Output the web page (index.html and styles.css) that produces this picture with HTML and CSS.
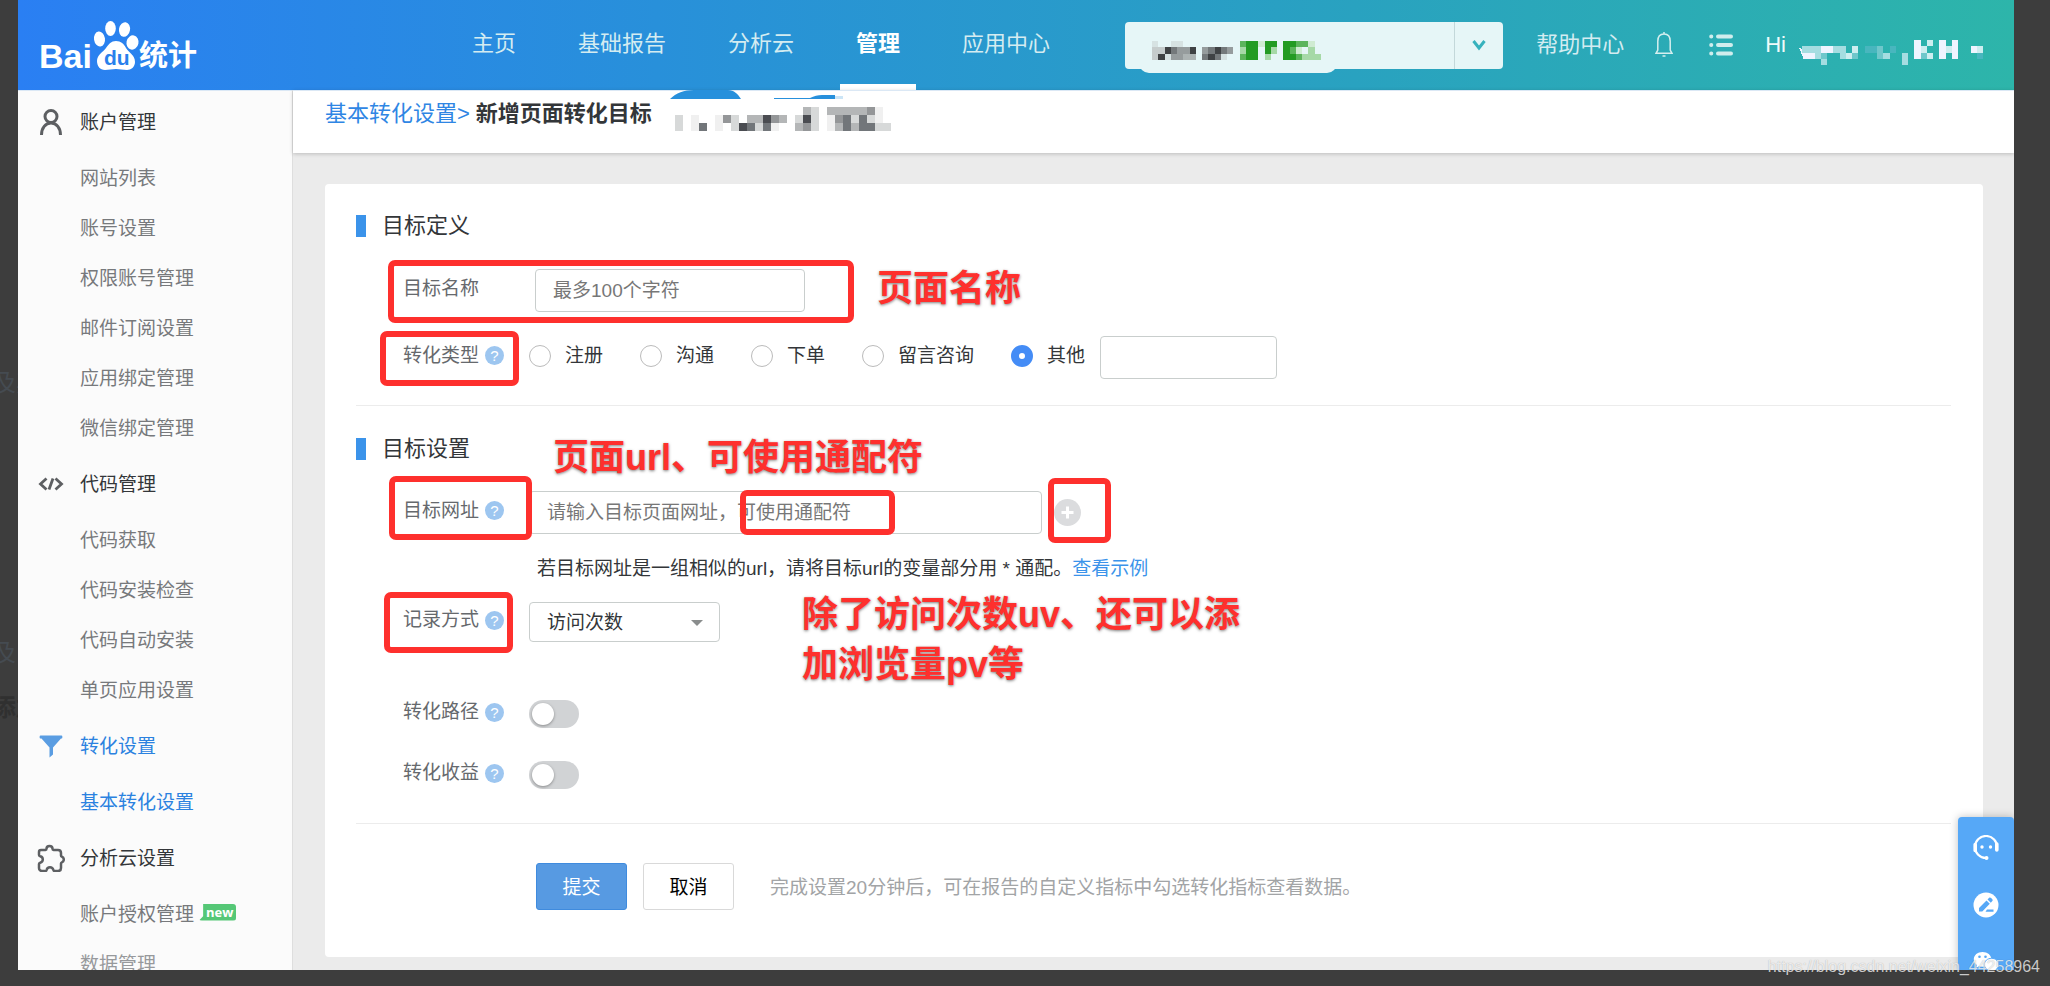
FILE: index.html
```html
<!DOCTYPE html>
<html lang="zh-CN">
<head>
<meta charset="utf-8">
<title>百度统计 - 新增页面转化目标</title>
<link rel="stylesheet" href="styles.css">
</head>
<body>
<div class="backdrop" aria-hidden="true">
  <span class="backdrop-text backdrop-a">及其</span>
  <span class="backdrop-text backdrop-b">及门</span>
  <span class="backdrop-text backdrop-c">添加</span>
</div>
<div class="page">
  <header class="topbar">
    <a class="logo" href="#" aria-label="百度统计">
      <svg width="158" height="54" viewBox="0 0 158 54">
        <g fill="#fff">
          <text x="-2" y="47" class="logo-latin">Bai</text>
          <ellipse cx="58.500" cy="18" rx="5.500" ry="7.500" transform="rotate(-8 58.500 18)"/>
          <ellipse cx="69.500" cy="7.500" rx="5.300" ry="7.500"/>
          <ellipse cx="83.500" cy="8.500" rx="5.500" ry="7.300" transform="rotate(10 83.500 8.500)"/>
          <ellipse cx="91.500" cy="21.500" rx="6" ry="7.200" transform="rotate(12 91.500 21.500)"/>
          <path d="M75 20c5 0 8 3 10 7 3 5 9 7 9 14 0 5-4 8-8 8-4 0-7-1-11-1s-7 1-11 1c-5 0-8-4-8-9 0-6 6-9 9-13 3-4 5-7 10-7z"/>
          <text x="98" y="45" class="logo-cjk">统计</text>
        </g>
        <text x="63" y="44" class="logo-du">du</text>
      </svg>
    </a>
    <nav class="mainnav">
      <a href="#">主页</a>
      <a href="#">基础报告</a>
      <a href="#">分析云</a>
      <a href="#" class="active" aria-current="page">管理</a>
      <a href="#">应用中心</a>
    </nav>
    <div class="tools">
      <div class="site-picker">
        <div class="site-name">
          <svg width="169" height="19" viewBox="0 0 27 3" preserveAspectRatio="none" shape-rendering="crispEdges" aria-hidden="true">
            <path fill="#d6e2e2" d="M0 0h1v1h-1zM3 0h2v1h-2zM2 2h1v1h-1zM11 2h1v1h-1z"/>
            <path fill="#c5cccc" d="M0 1h2v1h-2zM0 2h1v1h-1z"/>
            <path fill="#3f4244" d="M2 1h1v1h-1zM1 2h1v1h-1zM6 1h1v1h-1zM10 1h1v1h-1zM9 2h1v1h-1z"/>
            <path fill="#74797b" d="M3 1h1v1h-1zM8 2h1v1h-1zM9 1h1v1h-1zM10 2h1v1h-1zM11 1h1v1h-1z"/>
            <path fill="#969c9d" d="M4 1h2v1h-2zM4 2h1v1h-1zM3 2h1v1h-1zM8 1h1v1h-1zM12 1h1v1h-1z"/>
            <path fill="#acb3b3" d="M5 2h2v1h-2z"/>
            <path fill="#239b23" d="M15 0h2v3h-2zM18 0h2v1h-2zM18 1h1v1h-1zM21 0h1v3h-1zM22 0h1v1h-1zM22 2h1v1h-1z"/>
            <path fill="#5cb55c" d="M14 0h1v1h-1zM14 2h1v1h-1zM22 1h1v1h-1zM23 0h2v1h-2zM23 2h1v1h-1z"/>
            <path fill="#a6d9a7" d="M14 1h1v1h-1zM18 2h1v1h-1zM19 1h1v1h-1zM24 2h1v1h-1zM25 1h1v2h-1zM26 2h1v1h-1z"/>
            <path fill="#cfebd2" d="M17 0h1v1h-1zM23 1h1v1h-1zM25 0h1v1h-1z"/>
          </svg>
        </div>
        <button class="site-toggle" type="button" aria-label="切换网站">
          <svg width="14" height="12" viewBox="0 0 14 12"><path d="M1.500 2 7 9l5.500-7" fill="none" stroke="#36b2bd" stroke-width="3"/></svg>
        </button>
      </div>
      <a class="help" href="#">帮助中心</a>
      <button class="icon-btn" type="button" aria-label="通知">
        <svg width="18" height="26" viewBox="0 0 18 26"><path d="M9 2c4.200 0 6.200 3.200 6.200 7.200V18l1.800 3.300H1L2.800 18V9.200C2.800 5.200 4.800 2 9 2zM9 0v2M7.500 24h3" fill="none" stroke="#d5efef" stroke-width="1.500"/></svg>
      </button>
      <button class="icon-btn icon-list" type="button" aria-label="列表">
        <svg width="24" height="22" viewBox="0 0 24 22" stroke="#d0eded" stroke-width="4" stroke-linecap="round"><path d="M2.200 2.500h.1M2.200 11h.1M2.200 19.500h.1M9 2.500h13M9 11h13M9 19.500h13"/></svg>
      </button>
      <span class="greeting">Hi</span>
      <svg class="user-mask" width="187" height="25" viewBox="-1 0 30 4" preserveAspectRatio="none" shape-rendering="crispEdges" aria-hidden="true">
        <path fill="#eff4ff" d="M-.5 1.200L1 2h1v1H.2zM18 0h1v3h-1zM22 0h1v3h-1zM24 0h1v3h-1zM3 1h2v1h-2zM27 1h1v1h-1z"/>
        <path fill="#cdeef0" d="M20 0h1v1h-1zM8 1h1v1h-1zM7 2h1v1h-1zM20 2h1v1h-1zM23 1h1v1h-1zM19 1h1v1h-1zM28 1h1v1h-1z"/>
        <path fill="#a5dde1" d="M0 1h3v1h-3zM5 1h1v1h-1zM6 1h1v2h-1zM2 2h1v1h-1zM3 3h1v1h-1zM16 2h1v2h-1zM13 2h1v1h-1z"/>
        <path fill="#6fc7cb" d="M8 2h1v1h-1zM12 1h1v2h-1zM3 2h1v1h-1zM19 2h1v1h-1z"/>
        <path fill="#48b6be" d="M10 1h2v1h-2zM14 1h1v1h-1zM28 2h1v1h-1z"/>
      </svg>
    </div>
  </header>
  <div class="body">
    <aside class="sidebar">
      <section class="menu-group">
        <h2 class="menu-title">
          <svg class="menu-icon" viewBox="0 0 28 28" fill="none" stroke="#5d5f62" stroke-width="3"><circle cx="14" cy="8.500" r="6"/><path d="M4.500 27c0-7 4-12 9.500-12s9.500 5 9.500 12"/></svg>
          账户管理</h2>
        <a href="#">网站列表</a>
        <a href="#">账号设置</a>
        <a href="#">权限账号管理</a>
        <a href="#">邮件订阅设置</a>
        <a href="#">应用绑定管理</a>
        <a href="#">微信绑定管理</a>
      </section>
      <section class="menu-group">
        <h2 class="menu-title">
          <svg class="menu-icon" viewBox="0 0 28 28" fill="none" stroke="#5d5f62" stroke-width="2.800"><path d="M9.500 8.500 3.500 14l6 5.500M18.500 8.500l6 5.500-6 5.500M16 8.500l-4 11"/></svg>
          代码管理</h2>
        <a href="#">代码获取</a>
        <a href="#">代码安装检查</a>
        <a href="#">代码自动安装</a>
        <a href="#">单页应用设置</a>
      </section>
      <section class="menu-group">
        <h2 class="menu-title current">
          <svg class="menu-icon" viewBox="0 0 28 28" fill="#5a9de2"><path d="M3.500 3.500h21c1 0 1.200 2 .5 3H24l-8 9v7l-3.500 3v-10l-8-9H3c-.7-1-.5-3 .5-3z"/></svg>
          转化设置</h2>
        <a href="#" class="current">基本转化设置</a>
      </section>
      <section class="menu-group">
        <h2 class="menu-title">
          <svg class="menu-icon" viewBox="0 0 28 28" fill="none" stroke="#5d5f62" stroke-width="2.500" stroke-linejoin="round"><path d="M4 6h4.500c.7 0 1-.5 1-1.200C9.500 2.800 11 2 12.500 2s3 .8 3 2.800c0 .7.300 1.200 1 1.200H21c1.800 0 3 1.200 3 3v2.500c0 .6.300 1 .8 1.200 1.300.6 2 1.500 2 2.800s-.7 2.200-2 2.800c-.5.200-.8.600-.8 1.200V24c0 1.800-1.200 3-3 3h-3.500c-.7 0-1-.4-1.200-1.200-.4-1.700-1.500-2.600-3.300-2.600s-3 .9-3.300 2.600c-.2.800-.6 1.200-1.200 1.200H5c-1.800 0-3-1.200-3-3v-4c0-.8.500-1.100 1.200-1.300 1.600-.4 2.600-1.500 2.600-3.200s-1-2.800-2.600-3.200C2.500 12.100 2 11.800 2 11V8c0-1.200.8-2 2-2z"/></svg>
          分析云设置</h2>
        <a href="#">账户授权管理<span class="badge-new">new</span></a>
        <a href="#" class="faded">数据管理</a>
      </section>
    </aside>
    <main class="main">
      <div class="crumbs">
        <a href="#">基本转化设置&gt;</a>
        <h1>新增页面转化目标</h1>
        <svg class="crumb-mask" width="224" height="42" viewBox="0 0 224 42" aria-hidden="true">
          <path fill="#2790dc" d="M0 9C6 3 14 0 24 0h34c6 0 10 4 13 9zM104 8h36c4-2 8-3 12-3h13v4h-61z"/>
          <path fill="#cce5f6" d="M165 6h8v3h-8z"/>
          <g transform="translate(5 17) scale(8)" shape-rendering="crispEdges">
            <path fill="#d7d9d9" d="M0 1h1v2h-1zM7 1h1v2h-1zM10 2h1v1h-1zM17 0h1v3h-1zM15 1h1v1h-1zM22 1h1v1h-1zM24 1h1v1h-1zM25 2h2v1h-2z"/>
            <path fill="#f0f0f0" d="M2 1h1v2h-1zM5 1h1v2h-1zM12 2h1v1h-1zM19 1h1v2h-1zM25 0h1v2h-1z"/>
            <path fill="#4a4c51" d="M11 1h1v1h-1zM8 2h1v1h-1zM16 1h1v1h-1z"/>
            <path fill="#72767a" d="M3 2h1v1h-1zM9 2h1v1h-1zM11 2h1v1h-1zM21 1h1v2h-1zM23 1h1v2h-1zM24 2h1v1h-1z"/>
            <path fill="#949698" d="M6 1h1v1h-1zM12 1h1v1h-1zM16 2h1v1h-1zM24 0h1v1h-1zM20 1h1v1h-1z"/>
            <path fill="#b4b6b7" d="M9 1h2v1h-2zM13 1h1v1h-1zM16 0h1v1h-1zM15 2h1v1h-1zM19 0h5v1h-5zM20 2h1v1h-1zM22 2h1v1h-1z"/>
          </g>
        </svg>
      </div>
      <form class="card">
        <section class="section">
          <h2 class="section-title">目标定义</h2>
          <div class="row row-name">
            <div class="label"><label for="goal-name">目标名称</label></div>
            <input class="field field-name indent" id="goal-name" type="text" placeholder="最多100个字符">
          </div>
          <div class="row row-type">
            <div class="label">转化类型<span class="tip">?</span></div>
            <div class="radios" role="radiogroup" aria-label="转化类型">
              <label><input type="radio" name="type">注册</label>
              <label><input type="radio" name="type">沟通</label>
              <label><input type="radio" name="type">下单</label>
              <label><input type="radio" name="type">留言咨询</label>
              <label><input type="radio" name="type" checked>其他</label>
            </div>
            <input class="field field-other" type="text" aria-label="其他类型">
          </div>
        </section>
        <section class="section">
          <h2 class="section-title">目标设置</h2>
          <div class="row row-url">
            <div class="label"><label for="goal-url">目标网址</label><span class="tip">?</span></div>
            <input class="field field-url" id="goal-url" type="text" placeholder="请输入目标页面网址，可使用通配符">
            <button class="add" type="button" aria-label="添加网址">
              <svg width="27" height="27" viewBox="0 0 27 27"><circle cx="13.500" cy="13.500" r="13.500" fill="#dbdcde"/><path d="M13.500 7.500v12M7.500 13.500h12" stroke="#fff" stroke-width="3"/></svg>
            </button>
          </div>
          <p class="hint">若目标网址是一组相似的url，请将目标url的变量部分用 * 通配。<a href="#">查看示例</a></p>
          <div class="row row-method">
            <div class="label"><label for="method">记录方式</label><span class="tip">?</span></div>
            <div class="select"><select id="method"><option>访问次数</option></select></div>
          </div>
          <div class="row row-path">
            <div class="label"><label for="path">转化路径</label><span class="tip">?</span></div>
            <input class="switch" id="path" type="checkbox">
          </div>
          <div class="row row-income">
            <div class="label"><label for="income">转化收益</label><span class="tip">?</span></div>
            <input class="switch" id="income" type="checkbox">
          </div>
        </section>
        <div class="actions">
          <button class="btn btn-primary" type="submit">提交</button>
          <button class="btn" type="button">取消</button>
          <span class="note">完成设置20分钟后，可在报告的自定义指标中勾选转化指标查看数据。</span>
        </div>
        <div class="marks">
          <span class="box box-name"></span>
          <span class="box box-type"></span>
          <span class="box box-url"></span>
          <span class="box box-wild"></span>
          <span class="box box-add"></span>
          <span class="box box-method"></span>
          <p class="callout callout-name">页面名称</p>
          <p class="callout callout-url">页面url、可使用通配符</p>
          <p class="callout callout-method">除了访问次数uv、还可以添<br>加浏览量pv等</p>
        </div>
      </form>
    </main>
  </div>
  <div class="dock">
    <button type="button" aria-label="在线客服">
      <svg width="26" height="26" viewBox="0 0 26 26"><path d="M24 12.500a11 11 0 1 0-11 10.500" fill="none" stroke="#fff" stroke-width="2.200"/><path d="M2.200 9.500v6M23.800 9v6" stroke="#fff" stroke-width="3.600" stroke-linecap="round"/><circle cx="13.500" cy="23" r="2" fill="#fff"/><circle cx="9" cy="12" r="1.700" fill="#fff"/><circle cx="17.500" cy="12" r="1.700" fill="#fff"/></svg>
    </button>
    <button type="button" aria-label="意见反馈">
      <svg width="26" height="26" viewBox="0 0 26 26"><circle cx="13" cy="13" r="12.500" fill="#fff"/><path d="M6 19.500v-3.500l7.500-7.500 3.300 3.300-7.500 7.700zM14.500 7.500l1.700-1.700c.6-.6 1.300-.4 1.900.2l1.200 1.200c.6.600.6 1.200 0 1.800l-1.500 1.700zM14 17.500h6.500v2.200h-8z" fill="#56a8f7"/></svg>
    </button>
    <button type="button" aria-label="微信">
      <svg width="26" height="26" viewBox="0 0 26 26"><path d="M9.500 3C4.500 3 .8 6.200.8 10.300c0 2.300 1.200 4.300 3 5.700l-.6 2.800 3-1.500c1 .3 2.200.5 3.300.5 5 0 8.900-3.300 8.900-7.500S14.500 3 9.500 3z" fill="#fff"/><path d="M18.500 9.300c-4 0-7.200 2.800-7.200 6.300s3.200 6.300 7.200 6.300c.9 0 1.800-.1 2.600-.4l2.500 1.200-.5-2.200c1.600-1.200 2.600-2.900 2.600-4.900 0-3.500-3.200-6.300-7.200-6.300z" fill="#fff" stroke="#56a8f7"/><g fill="#56a8f7"><circle cx="6.500" cy="7.800" r="1.300"/><circle cx="12.500" cy="7.800" r="1.300"/></g></svg>
    </button>
  </div>
</div>
<span class="watermark">https://blog.csdn.net/weixin_44258964</span>
</body>
</html>
```

FILE: styles.css
```css
* { box-sizing: border-box; }

body {
  margin: 0;
  height: 100vh;
  padding: 0 36px 16px 18px;
  overflow: hidden;
  position: relative;
  background: #3d3d3d;
  color: #333639;
  font-family: "Liberation Sans", "Noto Sans CJK SC", sans-serif;
  font-size: 19px;
}

a { color: inherit; text-decoration: none; }
h1, h2, p { margin: 0; font-weight: 400; font-size: inherit; }
button { padding: 0; border: 0; background: none; font: inherit; cursor: pointer; }
input, select { font: inherit; color: inherit; margin: 0; }
svg { display: block; }

/* dimmed text of the page underneath */
.backdrop-text {
  position: absolute;
  left: -8px;
  font-size: 24px;
  line-height: 30px;
  color: #454b51;
}
.backdrop-a { top: 368px; }
.backdrop-b { top: 638px; }
.backdrop-c { top: 693px; color: #303030; font-weight: 700; }

.page {
  position: relative;
  height: 100%;
  overflow: hidden;
  display: flex;
  flex-direction: column;
  background: #ebebeb;
}

/* top bar */
.topbar {
  flex: none;
  height: 90px;
  padding: 0 31px 0 23px;
  display: flex;
  align-items: center;
  background: linear-gradient(90deg, #2a7ff3 0%, #2890da 32%, #29a2c0 67%, #2db5aa 100%);
  color: #d4ecf1;
  font-size: 22px;
}
.logo { padding-top: 6px; }
.logo svg { overflow: visible; }
.logo-latin { font: 700 34px "Liberation Sans", sans-serif; }
.logo-cjk { font: 700 29px "Noto Sans CJK SC", sans-serif; }
.logo-du { font: 700 21px "Liberation Sans", sans-serif; fill: #2880ec; }

.mainnav {
  display: flex;
  gap: 30px;
  margin-left: 257px;
  white-space: nowrap;
}
.mainnav a {
  height: 90px;
  padding: 0 16px;
  line-height: 88px;
  border-bottom: 6px solid transparent;
}
.mainnav .active { color: #fff; font-weight: 700; border-color: #fff; }

.tools {
  display: flex;
  align-items: center;
  margin-left: auto;
  white-space: nowrap;
}
.site-picker {
  position: relative;
  display: flex;
  width: 378px;
  height: 47px;
  margin-right: 33px;
  background: #e6f6f7;
  border-radius: 4px;
}
.site-picker::before {
  content: "";
  position: absolute;
  left: 14px;
  bottom: -4px;
  width: 198px;
  height: 20px;
  border-radius: 10px;
  background: #e6f6f7;
}
.site-name { position: relative; flex: 1; padding: 19px 0 0 27px; }
.site-toggle {
  width: 49px;
  display: grid;
  place-items: center;
  border-left: 1px solid #c3d8da;
}
.help { margin-right: 31px; line-height: 84px; }
.icon-list { margin: 0 32px 0 36px; }
.greeting { margin-right: 10px; line-height: 84px; color: #f0fafa; }
.user-mask { margin-top: 14px; }

.body { flex: 1; min-height: 0; display: flex; }

/* sidebar */
.sidebar {
  flex: none;
  width: 275px;
  overflow: hidden;
  background: #fbfbfb;
  border-top: 1px solid #dbe8f5;
  border-right: 1px solid #dedede;
  color: #77797c;
}
.menu-title {
  display: flex;
  align-items: center;
  gap: 15px;
  height: 62px;
  padding: 0 0 4px 19px;
  color: #333639;
}
.menu-icon { width: 28px; height: 32px; padding-top: 4px; }
.menu-group a {
  display: flex;
  align-items: center;
  gap: 5px;
  height: 50px;
  padding: 0 0 4px 62px;
}
.menu-title.current, .menu-group a.current { color: #2b82e0; }
.menu-group a.faded { color: #97999c; }
.badge-new {
  padding: 0 3px 0 7px;
  background: #55c776;
  color: #fff;
  font: 700 13px/17px "Open Sans", sans-serif;
  border-radius: 3px;
  clip-path: polygon(11% 0, 100% 0, 100% 100%, 0 100%, 11% 75%);
}

/* main column */
.main { flex: 1; min-width: 0; }
.crumbs {
  position: relative;
  display: flex;
  height: 63px;
  padding: 8px 32px 24px;
  background: #fff;
  border-top: 1px solid #dbe8f5;
  box-shadow: 0 1px 4px rgba(0, 0, 0, .2);
  font-size: 22px;
  line-height: 30px;
  white-space: nowrap;
}
.crumbs a { color: #2f86e4; margin-right: 6px; }
.crumbs h1 { font-weight: 700; }
.crumb-mask { position: absolute; left: 377px; top: -1px; }

.card {
  position: relative;
  margin: 31px 31px 0 32px;
  padding: 0 32px 47px 31px;
  background: #fff;
  border-radius: 4px;
}
.section { padding-top: 31px; border-bottom: 1px solid #ececec; }
.section + .section { padding-top: 32px; padding-bottom: 34px; }
.section:first-child { padding-bottom: 26px; }
.section-title {
  height: 22px;
  padding-left: 16px;
  border-left: 10px solid #3b93ea;
  font-size: 22px;
  line-height: 22px;
}

.row { display: flex; align-items: center; padding-left: 47px; white-space: nowrap; }
.row-name { margin-top: 32px; }
.row-type { margin-top: 24px; }
.row-url { margin-top: 31px; }
.row-method { margin-top: 18px; }
.row-path { margin-top: 58px; }
.row-income { margin-top: 33px; }

.label {
  flex: none;
  width: 126px;
  display: flex;
  align-items: center;
  gap: 6px;
  padding-bottom: 4px;
  line-height: 24px;
  color: #66696d;
}
.tip {
  width: 19px;
  height: 19px;
  border-radius: 50%;
  background: #9dc6f0;
  color: #fff;
  font-size: 15px;
  line-height: 19px;
  text-align: center;
}
.indent { margin-left: 6px; }

.field {
  height: 43px;
  padding: 0 17px;
  border: 1px solid #c9cecd;
  border-radius: 4px;
  background: #fff;
}
.field::placeholder { color: #777; opacity: 1; }
.field-name { width: 270px; }
.field-other { width: 177px; margin-left: 15px; }
.field-url { width: 513px; }
.add { margin-left: 12px; }

.radios { display: flex; gap: 37px; }
.radios label { display: flex; align-items: center; gap: 14px; line-height: 24px; padding-bottom: 4px; }
.radios input {
  appearance: none;
  width: 22px;
  height: 22px;
  border: 1px solid #bbb;
  border-radius: 50%;
  background: #fff;
}
.radios input:checked { border: 8px solid #448cf6; }

.hint { margin-top: 20px; padding-left: 181px; line-height: 30px; white-space: nowrap; }
.hint a { color: #3b93ea; }

.select { position: relative; width: 191px; }
.select select {
  appearance: none;
  width: 100%;
  height: 40px;
  padding: 0 17px;
  border: 1px solid #c9cecd;
  border-radius: 4px;
  background: #fff;
}
.select::after {
  content: "";
  position: absolute;
  right: 17px;
  top: 18px;
  border: 6px solid transparent;
  border-top-color: #8a8d8d;
  border-bottom: 0;
}

.switch {
  appearance: none;
  width: 50px;
  height: 28px;
  padding: 3px;
  border-radius: 14px;
  background: #d1d3d5;
}
.switch::before {
  content: "";
  display: block;
  width: 22px;
  height: 22px;
  border-radius: 50%;
  background: #fff;
  box-shadow: 0 1px 3px rgba(0, 0, 0, .35);
}

.actions {
  display: flex;
  align-items: center;
  gap: 16px;
  padding: 39px 0 0 180px;
}
.btn {
  width: 91px;
  height: 47px;
  padding-bottom: 2px;
  border: 1px solid #d9d9d9;
  border-radius: 3px;
  background: #fff;
}
.btn-primary { border-color: #3f8bde; background: #579ae2; color: #fff; }
.note { margin-left: 20px; padding-bottom: 2px; color: #a2a4a6; white-space: nowrap; }

/* tutorial marks drawn over the form */
.box, .callout { position: absolute; pointer-events: none; }
.box { border: 6px solid #fe302d; border-radius: 7px; }
.box-name { left: 63px; top: 76px; width: 466px; height: 63px; }
.box-type { left: 55px; top: 147px; width: 139px; height: 55px; }
.box-url { left: 64px; top: 292px; width: 143px; height: 64px; }
.box-wild { left: 415px; top: 306px; width: 155px; height: 45px; }
.box-add { left: 723px; top: 294px; width: 63px; height: 65px; }
.box-method { left: 59px; top: 408px; width: 129px; height: 61px; }
.callout {
  font: 700 36px/50px "Liberation Sans", "Noto Sans CJK SC", sans-serif;
  color: #fe302d;
  white-space: nowrap;
  -webkit-text-stroke: 6px #fff;
  paint-order: stroke fill;
  text-shadow: 0 1px 3px rgba(0, 0, 0, .5);
}
.callout-name { left: 552px; top: 80px; }
.callout-url { left: 228px; top: 249px; }
.callout-method { left: 477px; top: 406px; }

/* floating contact dock */
.dock {
  position: absolute;
  right: 0;
  bottom: 0;
  width: 56px;
  height: 153px;
  padding-top: 2px;
  overflow: hidden;
  background: #56a8f7;
  border-radius: 4px 4px 0 0;
  box-shadow: 0 0 8px rgba(0, 0, 0, .25);
}
.dock button {
  display: grid;
  place-items: center;
  width: 56px;
  height: 57px;
}

.watermark {
  position: absolute;
  right: 10px;
  bottom: 8px;
  font-size: 16px;
  line-height: 22px;
  color: rgba(255, 255, 255, .75);
  text-shadow: 0 0 1px rgba(0, 0, 0, .3);
}
```
